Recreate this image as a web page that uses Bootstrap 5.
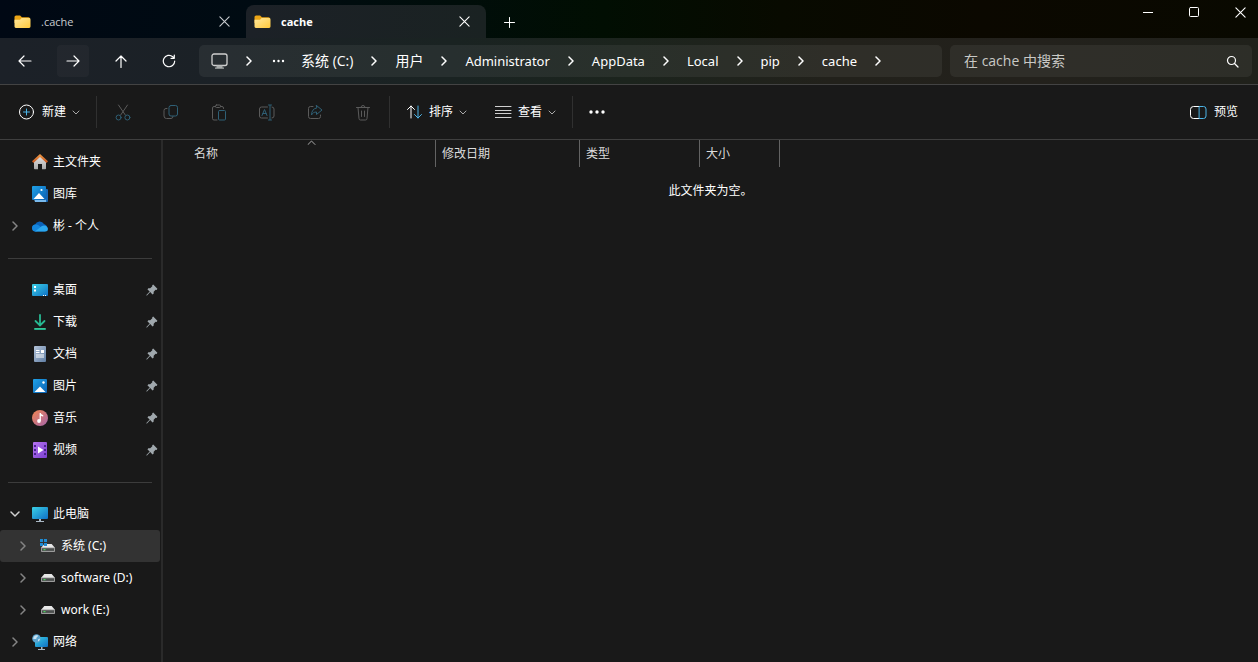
<!DOCTYPE html>
<html lang="zh-CN" data-bs-theme="dark">
<head>
<meta charset="utf-8">
<meta name="viewport" content="width=device-width, initial-scale=1">
<title>cache</title>
<link href="https://cdn.jsdelivr.net/npm/bootstrap@5.3.0/dist/css/bootstrap.min.css" rel="stylesheet">
<style>
  body { background: #191919; color: #fff; font: 12px/16px "Noto Sans", "Noto Sans CJK SC", sans-serif; }
  svg { display: block; flex: none; }
  button, a { color: inherit; }
  .line { fill: none; stroke: currentColor; stroke-linecap: round; stroke-linejoin: round; }
  .plain-btn { background: none; border: 0; padding: 0; display: flex; align-items: center; justify-content: center; }
  .plain-btn:hover { background: #ffffff10; }

  .title-strip { height: 38px; background: linear-gradient(90deg, #000814 0, #000b12 20%, #000d0a 36%, #010e02 48%, #080a00 62%, #0b0800 78%, #090900 100%); }
  .tab-item { height: 33px; width: 240px; padding: 0 16px 0 8px; gap: 10px; color: #c8ccd0; font-family: "Open Sans", sans-serif; font-size: 11px; }
  .tab-item.first-tab { width: 246px; padding-left: 14px; }
  .tab-item.current { background: linear-gradient(90deg, #1c2127, #1a2222); border-radius: 8px 8px 0 0; color: #fff; font-weight: 700; }
  .win-btn { width: 46px; height: 24px; }
  .win-group { margin-right: -5px; }

  .nav-strip { height: 47px; padding: 0 6px 0 1px; border-bottom: 1px solid #434343; background: linear-gradient(90deg, #1c2128 0, #1b2126 18%, #1a2322 36%, #1c241d 50%, #22211b 66%, #23211c 82%, #20211b 100%); }
  .nav-btn { width: 32px; height: 32px; margin: 0 8px; border-radius: 4px; }
  .nav-btn.lit { background: #ffffff08; }
  .addr { height: 32px; margin-left: 6px; border-radius: 5px; background: #ffffff0f; padding-left: 12px; }
  .crumb-list a { font-size: 13px; line-height: 20px; text-decoration: none; white-space: nowrap; }
  .crumb-list a.han { font-size: 14px; font-family: "Open Sans", "Noto Sans CJK SC", sans-serif; }
  .crumb-list li { display: flex; align-items: center; }
  .sep { width: 42px; display: flex; justify-content: center; }
  .find { flex: 0 0 302px; height: 32px; margin-left: 8px; border-radius: 5px; background: #ffffff0f; padding: 0 13px 0 14px; }
  .find input { background: none; border: 0; outline: 0; padding: 0; font: 14px/20px "Open Sans", "Noto Sans CJK SC", sans-serif; color: #fff; min-width: 0; }
  .find input::placeholder { color: #c9c9c6; opacity: 1; }

  .cmd-strip { height: 55px; border-bottom: 1px solid #3f3f3f; padding: 0 20px 0 18px; }
  .cmd { gap: 6px; height: 32px; }
  .tool { width: 48px; height: 32px; color: #5b5b5b; }
  .tool-group { padding: 0 2px; }
  .rule { width: 1px; height: 32px; background: #303030; }
  .accent { stroke: #4cb4e7; }
  .dim-accent { stroke: #2f6076; }
  .soft { color: #aaa; }
  .pale { color: #d0d0d0; }

  .side { width: 163px; border-right: 2px solid #2a2a2a; padding-top: 6px; flex: none; }
  .side a { height: 32px; margin-right: 1px; padding-left: 8px; text-decoration: none; display: flex; align-items: center; border-radius: 3px; }
  .side a.child { padding-left: 16px; }
  .side a.chosen { background: #333; }
  .twist { width: 14px; margin-right: 10px; color: #858585; }
  .side .pic { margin-right: 5px; }
  .side .pin { margin-left: auto; margin-right: 2px; }
  .side hr { margin: 16px 9px 15px 8px; border: 0; border-top: 1px solid #3c3c3c; opacity: 1; }

  .files { border-collapse: separate; border-spacing: 0; width: 100%; table-layout: fixed; }
  .files th { height: 27px; font-weight: 400; color: #dcdcdc; padding: 0 0 0 6px; border-right: 1px solid #636363; position: relative; }
  .files th:first-child { padding-left: 31px; }
  .files th:last-child { border: 0; }
  .files td { height: 47px; text-align: center; padding: 0; }
  .col-name { width: 273px; }
  .col-date { width: 144px; }
  .col-type { width: 120px; }
  .col-size { width: 80px; }
  .sort-mark { position: absolute; top: 0; left: 144px; }
</style>
</head>
<body class="min-vh-100 d-flex flex-column">

<svg width="0" height="0" class="position-absolute" aria-hidden="true">
  <defs>
    <linearGradient id="gFolder" x1="0" y1="0" x2="1" y2="1"><stop stop-color="#ffe9a0"/><stop offset="1" stop-color="#ffc83a"/></linearGradient>
    <linearGradient id="gBlue" x1="0" y1="0" x2="1" y2="1"><stop stop-color="#3ad0e6"/><stop offset="1" stop-color="#0f6fc4"/></linearGradient>
    <linearGradient id="gPhoto" x1="0" y1="0" x2="1" y2="1"><stop stop-color="#1fa2e8"/><stop offset="1" stop-color="#0b62b4"/></linearGradient>
    <linearGradient id="gDoc" x1="0" y1="0" x2="1" y2="1"><stop stop-color="#b5c5da"/><stop offset="1" stop-color="#5f7da3"/></linearGradient>
    <linearGradient id="gMusic" x1="0" y1="0" x2="1" y2="1"><stop stop-color="#f2854f"/><stop offset="1" stop-color="#a566ad"/></linearGradient>
    <linearGradient id="gVideo" x1="0" y1="0" x2="1" y2="1"><stop stop-color="#b673f0"/><stop offset="1" stop-color="#7a3fd0"/></linearGradient>
    <linearGradient id="gHome" x1="0" y1="0" x2="0" y2="1"><stop stop-color="#e6e6e6"/><stop offset="1" stop-color="#a9a9a9"/></linearGradient>
    <linearGradient id="gRoof" x1="0" y1="0" x2="0" y2="1"><stop stop-color="#f5a04a"/><stop offset="1" stop-color="#c2501c"/></linearGradient>
    <linearGradient id="gDown" x1="0" y1="0" x2="0" y2="1"><stop stop-color="#3fcf9b"/><stop offset="1" stop-color="#19a587"/></linearGradient>
  </defs>
  <symbol id="folder" viewBox="0 0 16 14"><path d="M0 2a1.600 1.600 0 0 1 1.600-1.600h4L7.500 2.200h6.500a1.500 1.500 0 0 1 1.500 1.500V8H0z" fill="#eba516"/><path d="M0 4.800h5.500L7.200 3h7.400A1.400 1.400 0 0 1 16 4.400v7.200a1.400 1.400 0 0 1-1.400 1.400H1.400A1.400 1.400 0 0 1 0 11.600z" fill="url(#gFolder)"/></symbol>
  <symbol id="cross" viewBox="0 0 10 10"><path class="line" d="M.8.800l8.400 8.400M9.200.800L.8 9.200"/></symbol>
  <symbol id="right" viewBox="0 0 6 10"><path class="line" stroke-width="1.500" d="M1 1l4 4-4 4"/></symbol>
  <symbol id="down" viewBox="0 0 8 5"><path class="line" d="M1 1l3 3 3-3"/></symbol>
  <symbol id="drive" viewBox="0 0 14 8"><path d="M3.300 0h7.400L14 4H0z" fill="#e8e8e8"/><rect y="3.500" width="14" height="4.500" rx=".8" fill="#9b9b9b"/><rect x="1" y="4.300" width="12" height="2.600" fill="#4c4f4e"/><rect x="2.500" y="5" width="2" height="1.200" fill="#47d45a"/></symbol>
  <symbol id="pin" viewBox="0 0 12 12"><path d="M7.200.6L11.400 4.800 10.600 5.900 9.600 5.700 7.700 7.700 7.600 9.700 6.500 10.400 4.200 8.100 1 11.500.4 11.500.4 10.900 3.700 7.600 1.500 5.400 2.300 4.300 4.200 4.200 6.300 2.300 6.200 1.300z" fill="#a0a8ad"/></symbol>
</svg>

<header>
  <div class="title-strip d-flex overflow-hidden">
    <div class="d-flex align-items-end">
      <div class="tab-item first-tab d-flex align-items-center">
        <svg width="17" height="14"><use href="#folder"/></svg><span>.cache</span>
        <button class="plain-btn ms-auto" aria-label="关闭标签页 .cache"><svg width="11" height="11"><use href="#cross"/></svg></button>
      </div>
      <div class="tab-item current d-flex align-items-center">
        <svg width="17" height="14"><use href="#folder"/></svg><span>cache</span>
        <button class="plain-btn ms-auto" aria-label="关闭标签页 cache"><svg width="11" height="11"><use href="#cross"/></svg></button>
      </div>
      <button class="plain-btn win-btn mb-1" aria-label="新标签页"><svg width="11" height="11"><path class="line" d="M5.500.5v10M.5 5.500h10"/></svg></button>
    </div>
    <div class="win-group d-flex ms-auto">
      <button class="plain-btn win-btn" aria-label="最小化"><svg width="10" height="10"><path class="line" d="M0 5.500h10"/></svg></button>
      <button class="plain-btn win-btn" aria-label="最大化"><svg width="11" height="11"><rect class="line" x=".5" y=".5" width="9" height="9" rx="1"/></svg></button>
      <button class="plain-btn win-btn" aria-label="关闭"><svg width="11" height="11"><use href="#cross"/></svg></button>
    </div>
  </div>

  <div class="nav-strip d-flex align-items-center">
    <button class="plain-btn nav-btn" aria-label="后退"><svg width="14" height="12"><path class="line" stroke-width="1.200" d="M13 6H1M6 1L1 6l5 5"/></svg></button>
    <button class="plain-btn nav-btn lit" aria-label="前进"><svg width="14" height="12"><path class="line" stroke-width="1.200" d="M1 6h12M8 1l5 5-5 5"/></svg></button>
    <button class="plain-btn nav-btn" aria-label="向上"><svg width="12" height="13"><path class="line" stroke-width="1.200" d="M6 12.500V1M1 6l5-5 5 5"/></svg></button>
    <button class="plain-btn nav-btn" aria-label="刷新"><svg width="14" height="14"><path class="line" stroke-width="1.200" d="M12.700 7a5.700 5.700 0 1 1-2-4.300L12 4M12.300 1v3.300H9"/></svg></button>
    <nav class="addr flex-grow-1 d-flex align-items-center" aria-label="地址">
      <svg class="pale" width="17" height="16"><rect class="line" x="1" y="1" width="15" height="11.500" rx="2" stroke-width="1.300"/><path d="M5.500 12.500h6v2h1.500v1.300H4v-1.300h1.500z" fill="#a8acac"/></svg>
      <span class="sep"><svg width="6" height="10"><use href="#right"/></svg></span>
      <button class="plain-btn me-3" aria-label="更多位置"><svg width="15" height="4" fill="#fff"><circle cx="4" cy="2" r="1.200"/><circle cx="8.500" cy="2" r="1.200"/><circle cx="13" cy="2" r="1.200"/></svg></button>
      <ol class="crumb-list list-unstyled d-flex mb-0">
        <li><a class="han" href="#">系统 (C:)</a><span class="sep"><svg width="6" height="10"><use href="#right"/></svg></span></li>
        <li><a class="han" href="#">用户</a><span class="sep"><svg width="6" height="10"><use href="#right"/></svg></span></li>
        <li><a href="#">Administrator</a><span class="sep"><svg width="6" height="10"><use href="#right"/></svg></span></li>
        <li><a href="#">AppData</a><span class="sep"><svg width="6" height="10"><use href="#right"/></svg></span></li>
        <li><a href="#">Local</a><span class="sep"><svg width="6" height="10"><use href="#right"/></svg></span></li>
        <li><a href="#">pip</a><span class="sep"><svg width="6" height="10"><use href="#right"/></svg></span></li>
        <li><a href="#">cache</a><span class="sep"><svg width="6" height="10"><use href="#right"/></svg></span></li>
      </ol>
    </nav>
    <form class="find d-flex align-items-center" role="search">
      <input class="flex-grow-1" type="search" placeholder="在 cache 中搜索" aria-label="在 cache 中搜索">
      <button type="button" class="plain-btn" aria-label="搜索"><svg width="13" height="13"><circle class="line" cx="5.500" cy="5.500" r="4" stroke-width="1.200"/><path class="line" stroke-width="1.200" d="M8.500 8.500l3.500 3.500"/></svg></button>
    </form>
  </div>

  <div class="cmd-strip d-flex align-items-center">
    <button class="plain-btn cmd me-3"><svg width="18" height="16"><circle class="line" cx="8.500" cy="8" r="7"/><path class="line accent" d="M8.500 5v6M5.500 8h6"/></svg><span>新建</span><svg class="soft" width="8" height="5"><use href="#down"/></svg></button>
    <span class="rule"></span>
    <div class="tool-group d-flex">
      <button class="plain-btn tool" aria-label="剪切" disabled><svg width="16" height="17"><path class="line" d="M3.500 1l6.800 10M12.500 1L5.700 11"/><circle class="line dim-accent" cx="3.600" cy="13.500" r="2.500"/><circle class="line dim-accent" cx="12.400" cy="13.500" r="2.500"/></svg></button>
      <button class="plain-btn tool" aria-label="复制" disabled><svg width="16" height="16"><path class="line" d="M4 4.500H3a2 2 0 0 0-2 2V12a2.500 2.500 0 0 0 2.500 2.500H8a2 2 0 0 0 2-2"/><rect class="line dim-accent" x="6" y="1.500" width="8.500" height="10.500" rx="2"/></svg></button>
      <button class="plain-btn tool" aria-label="粘贴" disabled><svg width="16" height="17"><path class="line" d="M6 16H3a1.500 1.500 0 0 1-1.500-1.500V4A1.500 1.500 0 0 1 3 2.500h1.500M9.500 2.500H11A1.500 1.500 0 0 1 12.500 4v.5"/><rect class="line" x="4.500" y="1" width="5" height="2.500" rx="1"/><rect class="line dim-accent" x="7.500" y="6.500" width="7" height="9.500" rx="1"/></svg></button>
      <button class="plain-btn tool" aria-label="重命名" disabled><svg width="18" height="17"><path class="line" d="M9.500 14H3.500A2 2 0 0 1 1.500 12V5a2 2 0 0 1 2-2h6M14 3a2 2 0 0 1 2 2v7a2 2 0 0 1-2 2"/><path class="line dim-accent" d="M4 11.500L6.500 5.500 9 11.500M5 9.500h3M12 1.500v14M10.500 1h3M10.500 16h3"/></svg></button>
      <button class="plain-btn tool" aria-label="共享" disabled><svg width="16" height="16"><path class="line" d="M6 2.500H3.500a2 2 0 0 0-2 2v8a2 2 0 0 0 2 2h8a2 2 0 0 0 2-2V11"/><path class="line dim-accent" d="M9.500 1.500L15 6l-5.500 4.500V8C7 8 5.500 9 4.500 11c0-4 2-6.500 5-7z"/></svg></button>
      <button class="plain-btn tool" aria-label="删除" disabled><svg width="16" height="17"><path class="line" d="M1.500 3.500h13M3 3.500l1 11A1.500 1.500 0 0 0 5.500 16h5a1.500 1.500 0 0 0 1.500-1.500l1-11M6 3.500a2 2 0 0 1 4 0M6.500 7v5.500M9.500 7v5.500"/></svg></button>
    </div>
    <span class="rule"></span>
    <button class="plain-btn cmd ms-3 me-4"><svg width="17" height="14"><path class="line" d="M5 13V1M1.500 4.500L5 1l3.500 3.500"/><path class="line accent" d="M12 1v12M8.500 9.500L12 13l3.500-3.500"/></svg><span>排序</span><svg class="soft" width="8" height="5"><use href="#down"/></svg></button>
    <button class="plain-btn cmd me-3 ms-1"><svg class="pale" width="17" height="12"><path class="line" d="M0 .5h16M0 4.500h16M0 7.500h16M0 11.500h16"/></svg><span>查看</span><svg class="soft" width="8" height="5"><use href="#down"/></svg></button>
    <span class="rule"></span>
    <button class="plain-btn tool text-white" aria-label="查看更多"><svg width="18" height="4" fill="currentColor"><circle cx="3" cy="2" r="1.700"/><circle cx="9" cy="2" r="1.700"/><circle cx="15" cy="2" r="1.700"/></svg></button>
    <button class="plain-btn cmd ms-auto"><svg width="18" height="13"><path class="line" d="M9.500.5h-6a3 3 0 0 0-3 3v6a3 3 0 0 0 3 3h6"/><path class="line accent" d="M9.500.5h4a2.500 2.500 0 0 1 2.500 2.500v7a2.500 2.500 0 0 1-2.500 2.500h-4z"/></svg><span>预览</span></button>
  </div>
</header>

<div class="d-flex flex-grow-1">
  <nav class="side" aria-label="导航窗格">
    <a href="#"><span class="twist"></span><svg class="pic" width="16" height="16"><path d="M2 7l6-5.500L14 7v7.500a.8.800 0 0 1-.8.800H10V10H6v5.300H2.800a.8.800 0 0 1-.8-.8z" fill="url(#gHome)"/><path d="M8 0l8 7.300L14.600 9 8 3 1.400 9 0 7.300z" fill="url(#gRoof)"/></svg>主文件夹</a>
    <a href="#"><span class="twist"></span><svg class="pic" width="16" height="16"><path d="M3 3h12a1 1 0 0 1 1 1v11a1 1 0 0 1-1 1H3z" fill="#1767b5"/><path d="M2 13h12v3H3z" fill="#78b9ec"/><rect width="14" height="14" rx="1" fill="url(#gPhoto)"/><path d="M1.500 13L7 7l5.500 6z" fill="#fff"/><circle cx="9.500" cy="4" r="1.100" fill="#fff"/></svg>图库</a>
    <a href="#"><span class="twist d-flex justify-content-center"><svg width="6" height="10"><use href="#right"/></svg></span><svg class="pic" width="16" height="12"><path d="M3.500 11.500A3.500 3.500 0 0 1 3 4.600 5 5 0 0 1 12 4a4 4 0 0 1 1 7.500z" fill="#0b62b8"/><path d="M3.500 11.500a3.500 3.500 0 0 1 0-7c2 0 3 .6 4.500 2l5 3z" fill="#1486dd"/><path d="M3 11.500L9.500 6.300c3-2 6.500 0 6.500 2.700a2.600 2.600 0 0 1-2.600 2.500z" fill="#2ba7ee"/></svg>彬 - 个人</a>
    <hr>
    <a href="#"><span class="twist"></span><svg class="pic" width="16" height="13"><rect width="16" height="12" rx="1" fill="url(#gBlue)"/><path d="M2 2h2v2H2zM2 5.500h2v2H2zM11 11h1v1h-1zM13 11h1v1h-1z" fill="#fff"/></svg>桌面<svg class="pin" width="12" height="12"><use href="#pin"/></svg></a>
    <a href="#"><span class="twist"></span><svg class="pic" width="16" height="16"><path d="M8 1v10M3.500 7L8 11.500 12.500 7" fill="none" stroke="#27b892" stroke-width="1.800" stroke-linecap="round"/><rect x="2" y="14" width="12" height="2" rx="1" fill="url(#gDown)"/></svg>下载<svg class="pin" width="12" height="12"><use href="#pin"/></svg></a>
    <a href="#"><span class="twist"></span><svg class="pic" width="16" height="16"><rect x="2" width="12" height="16" rx="1" fill="url(#gDoc)"/><path d="M4 4.500h3.500M4 6.500h3.500M4 9h8M4 11h8" stroke="#fff"/><rect x="9" y="4" width="3" height="3" fill="#fff"/></svg>文档<svg class="pin" width="12" height="12"><use href="#pin"/></svg></a>
    <a href="#"><span class="twist"></span><svg class="pic" width="16" height="14"><rect x="1" width="14" height="14" rx="1" fill="url(#gPhoto)"/><path d="M2.500 13L8 7.500l5.500 5.500z" fill="#fff"/><circle cx="11.500" cy="3.500" r="1.200" fill="#fff"/></svg>图片<svg class="pin" width="12" height="12"><use href="#pin"/></svg></a>
    <a href="#"><span class="twist"></span><svg class="pic" width="16" height="16"><circle cx="8" cy="8" r="8" fill="url(#gMusic)"/><circle cx="7" cy="11" r="1.900" fill="#fff"/><path d="M7.600 3h1.200c.2 1.300 1 1.500 2.400 2v1.600c-1 0-1.800-.3-2.300-.8V11H7.600z" fill="#fff"/></svg>音乐<svg class="pin" width="12" height="12"><use href="#pin"/></svg></a>
    <a href="#"><span class="twist"></span><svg class="pic" width="16" height="16"><rect x="1" width="14" height="16" rx="1" fill="url(#gVideo)"/><path d="M2 3h2v2H2zM2 7h2v2H2zM2 11h2v2H2zM12 3h2v2h-2zM12 7h2v2h-2zM12 11h2v2h-2z" fill="#4a2390"/><path d="M6 4.500L11.500 8 6 11.500z" fill="#fff"/></svg>视频<svg class="pin" width="12" height="12"><use href="#pin"/></svg></a>
    <hr>
    <a href="#"><span class="twist d-flex justify-content-center"><svg class="pale" width="10" height="6"><path class="line" stroke-width="1.500" d="M1 1l4 4 4-4"/></svg></span><svg class="pic" width="16" height="16"><rect y="1" width="16" height="12" rx="1" fill="url(#gBlue)"/><path d="M7 13h2v2h3v1H4v-1h3z" fill="#a9b7c4"/></svg>此电脑</a>
    <a href="#" class="child chosen"><span class="twist d-flex justify-content-center"><svg width="6" height="10"><use href="#right"/></svg></span><svg class="pic" width="16" height="14"><use href="#drive" x="1" y="5" width="14" height="8"/><path d="M0 0h3v3H0zM4 0h3v3H4zM0 4h3v3H0zM4 4h3v3H4z" fill="#1f8ad2"/></svg>系统 (C:)</a>
    <a href="#" class="child"><span class="twist d-flex justify-content-center"><svg width="6" height="10"><use href="#right"/></svg></span><svg class="pic" width="16" height="8"><use href="#drive" x="1" width="14" height="8"/></svg>software (D:)</a>
    <a href="#" class="child"><span class="twist d-flex justify-content-center"><svg width="6" height="10"><use href="#right"/></svg></span><svg class="pic" width="16" height="8"><use href="#drive" x="1" width="14" height="8"/></svg>work (E:)</a>
    <a href="#"><span class="twist d-flex justify-content-center"><svg width="6" height="10"><use href="#right"/></svg></span><svg class="pic" width="16" height="16"><rect x="3" y="3" width="13" height="10" rx="1" fill="url(#gBlue)"/><path d="M9 13h1.500v2H13v1H6v-1h3z" fill="#a9b7c4"/><circle cx="4.500" cy="4.500" r="4.300" fill="#5ba4cf"/><path d="M2 2.500c1.500-1.500 3-1.500 4-1 .3 1.500-2 1.500-1.500 3-1 1-2.500.5-3.500 0zM6 5.500l2-1c0 1.500-1 2.500-2 3z" fill="#c8e2f1"/></svg>网络</a>
  </nav>

  <main class="flex-grow-1">
    <table class="files">
      <colgroup><col class="col-name"><col class="col-date"><col class="col-type"><col class="col-size"><col></colgroup>
      <thead>
        <tr><th scope="col" aria-sort="ascending">名称<svg class="sort-mark soft" width="9" height="5"><path class="line" d="M1 4.500L4.500 1 8 4.500"/></svg></th><th scope="col">修改日期</th><th scope="col">类型</th><th scope="col">大小</th><th></th></tr>
      </thead>
      <tbody><tr><td colspan="5">此文件夹为空。</td></tr></tbody>
    </table>
  </main>
</div>

<script src="https://cdn.jsdelivr.net/npm/bootstrap@5.3.0/dist/js/bootstrap.bundle.min.js"></script>
</body>
</html>
